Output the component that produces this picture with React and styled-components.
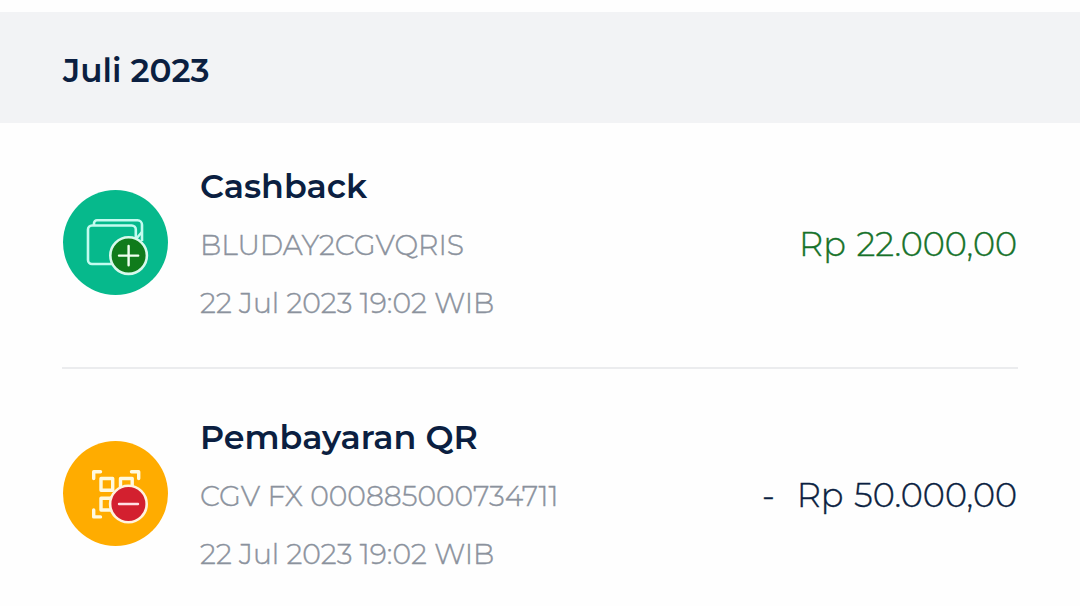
import React from "react";
import styled, { createGlobalStyle } from "styled-components";

const GlobalStyle = createGlobalStyle`
  body {
    margin: 0;
    background: #fefefe;
    font-family: "Montserrat", "Inter", sans-serif;
  }
`;

const Container = styled.div`
  height: 606px;
  overflow: hidden;
  padding-top: 12px;
  box-sizing: border-box;
`;

const MonthHeader = styled.div`
  display: flex;
  align-items: center;
  height: 111px;
  padding: 6px 63px 0;
  box-sizing: border-box;
  background: #f2f3f5;
`;

const Title = styled.div`
  padding-bottom: 2px;
  color: #0b1f41;
  font-size: ${props => props.$size}px;
  font-weight: 600;
  line-height: 56px;
  white-space: nowrap;
`;

const List = styled.div`
  padding: 35px 62px 0;
`;

const Item = styled.div`
  display: flex;
  align-items: center;
  height: 174px;
  padding: 0 1px;
`;

const IconContainer = styled.div`
  width: 105px;
  height: 105px;
  margin-top: -5px;
  margin-right: 32px;

  svg {
    display: block;
  }
`;

const InfoContainer = styled.div`
  flex: 1;
`;

const Detail = styled.div`
  color: #8b929d;
  font-size: 28.25px;
  font-weight: 300;
  line-height: 58px;
  white-space: nowrap;
  -webkit-text-stroke: 0.4px currentColor;
`;

const Amount = styled.div`
  display: flex;
  margin-top: -2px;
  color: ${props => (props.$credit ? "#16722a" : "#0b1f41")};
  font-size: 33.5px;
  font-weight: 300;
  line-height: 58px;
  white-space: nowrap;
  word-spacing: 2px;
  -webkit-text-stroke: 0.4px currentColor;
`;

const Sign = styled.span`
  margin-right: 22px;
`;

const Divider = styled.div`
  height: 2px;
  margin: 35px 0 40px;
  background: #ebecee;
`;

const CashbackIcon = () => (
  <svg width="105" height="105" viewBox="0 0 105 105" fill="none">
    <circle cx="52.5" cy="52.5" r="52.5" fill="#06b98c" />
    <g stroke="#c3fbef" strokeWidth="2.6" strokeLinejoin="round">
      <path d="M31 35V33.3a3 3 0 0 1 3-3H74.5a4.5 4.5 0 0 1 4.5 4.5V51" />
      <rect x="25" y="35.5" width="47.8" height="38.5" rx="4" />
      <path d="M73 49l6-7" />
    </g>
    <circle cx="65.6" cy="65.6" r="18.3" fill="#107b1b" stroke="#d8f9ec" strokeWidth="2.6" />
    <path d="M56 65.6H75.2M65.6 56V75.2" stroke="#f0fff0" strokeWidth="2.4" strokeLinecap="round" />
  </svg>
);

const QrIcon = () => (
  <svg width="105" height="105" viewBox="0 0 105 105" fill="none">
    <circle cx="52.5" cy="52.5" r="52.5" fill="#ffac00" />
    <g stroke="#fff9df" strokeWidth="3.4" strokeLinejoin="round">
      <path
        d="M30.7 37.5V30.7H37.5M68.5 30.7H75.7V37.5M30.7 69V75.9H37.5"
        strokeLinecap="round"
      />
      <rect x="38" y="37.5" width="11.7" height="11.7" />
      <rect x="57.5" y="37.5" width="11.7" height="11.7" />
      <rect x="38" y="57.3" width="11.7" height="11.7" />
    </g>
    <circle cx="65.4" cy="63" r="18.3" fill="#d3202f" stroke="#fff3df" strokeWidth="2.6" />
    <path d="M56 63H75" stroke="#ffe0e4" strokeWidth="2.4" strokeLinecap="round" />
  </svg>
);

const transactions = [
  {
    title: "Cashback",
    icon: <CashbackIcon />,
    reference: "BLUDAY2CGVQRIS",
    date: "22 Jul 2023 19:02 WIB",
    amount: "Rp 22.000,00",
    credit: true
  },
  {
    title: "Pembayaran QR",
    icon: <QrIcon />,
    reference: "CGV FX 000885000734711",
    date: "22 Jul 2023 19:02 WIB",
    amount: "Rp 50.000,00",
    credit: false
  }
];

export default class App extends React.Component {
  render() {
    return (
      <Container>
        <GlobalStyle />
        <MonthHeader>
          <Title $size={32.7}>Juli 2023</Title>
        </MonthHeader>
        <List>
          {transactions.map((ele, idx) => (
            <React.Fragment key={idx}>
              {idx > 0 && <Divider />}
              <Item>
                <IconContainer>{ele.icon}</IconContainer>
                <InfoContainer>
                  <Title $size={33.3}>{ele.title}</Title>
                  <Detail>{ele.reference}</Detail>
                  <Detail>{ele.date}</Detail>
                </InfoContainer>
                <Amount $credit={ele.credit}>
                  {!ele.credit && <Sign>-</Sign>}
                  <span>{ele.amount}</span>
                </Amount>
              </Item>
            </React.Fragment>
          ))}
        </List>
      </Container>
    );
  }
}
